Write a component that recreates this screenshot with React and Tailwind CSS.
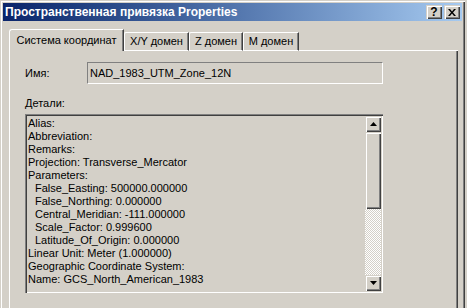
import React from 'react';

const raised =
  'shadow-[inset_1px_1px_#d4d0c8,inset_2px_2px_#fff,inset_-1px_-1px_#404040,inset_-2px_-2px_#808080]';

const details = [
  ['Alias:', false],
  ['Abbreviation:', false],
  ['Remarks:', false],
  ['Projection: Transverse_Mercator', false],
  ['Parameters:', false],
  ['False_Easting: 500000.000000', true],
  ['False_Northing: 0.000000', true],
  ['Central_Meridian: -111.000000', true],
  ['Scale_Factor: 0.999600', true],
  ['Latitude_Of_Origin: 0.000000', true],
  ['Linear Unit: Meter (1.000000)', false],
  ['Geographic Coordinate System:', false],
  ['Name: GCS_North_American_1983', false],
];

const Arrow = ({ down }) => (
  <svg width="7" height="4" viewBox="0 0 7 4">
    {down ? <path d="M0 0h7L3.5 4z" fill="#000" /> : <path d="M3.5 0L7 4H0z" fill="#000" />}
  </svg>
);

const Tab = ({ label, width, active }) => (
  <div
    className={
      active
        ? 'h-[22px] flex items-center justify-center border-l border-t border-white rounded-tl-[3px] border-r border-r-[#404040] shadow-[inset_-1px_0_#808080]'
        : 'h-[19px] flex items-center justify-center border-l border-t border-b border-white border-r border-r-[#404040] rounded-tl-[2px] shadow-[inset_-1px_0_#808080]'
    }
    style={{ width }}
  >
    {label}
  </div>
);

export default function App() {
  return (
    <div className="w-[467px] h-[308px] overflow-hidden bg-[#d4d0c8] font-['Liberation_Sans',sans-serif] text-[11px] text-black leading-[13px]">
      <div className="w-[465px] h-[330px] p-[3px] shadow-[inset_1px_1px_#d4d0c8,inset_2px_2px_#fff,inset_-1px_-1px_#404040,inset_-2px_-2px_#808080]">
        {/* title bar */}
        <div className="h-[18px] flex items-center pl-[2px] pr-[2px] gap-[2px] bg-gradient-to-r from-[#0a246a] to-[#a6caf0]">
          <span className="flex-1 font-bold text-white text-[12px]">Пространственная привязка Properties</span>
          <div className={`w-[16px] h-[14px] bg-[#d4d0c8] flex items-center justify-center font-bold text-[12px] ${raised}`}>?</div>
          <div className={`w-[16px] h-[14px] bg-[#d4d0c8] flex items-center justify-center ${raised}`}>
            <svg width="8" height="7" viewBox="0 0 8 7">
              <path d="M0 0h2l2 2.5L6 0h2L5 3.5 8 7H6L4 4.5 2 7H0l3-3.5z" fill="#000" />
            </svg>
          </div>
        </div>

        <div className="ml-[6px] mt-[8px] w-[449px]">
          {/* tabs */}
          <div className="flex items-end">
            <Tab label="Система координат" width={115} active />
            <Tab label="X/Y домен" width={65} />
            <Tab label="Z домен" width={54} />
            <Tab label="M домен" width={56} />
            <div className="flex-1 border-b border-white" />
          </div>

          {/* panel */}
          <div className="h-[260px] border-l border-white border-r border-r-[#404040] shadow-[inset_-1px_0_#808080] pl-[15px] pt-[11px]">
            <div className="flex items-center">
              <span className="w-[62px]">Имя:</span>
              <div className="w-[296px] h-[22px] flex items-center pl-[2px] border border-t-[#808080] border-l-[#808080] border-b-white border-r-white">
                NAD_1983_UTM_Zone_12N
              </div>
            </div>

            <div className="mt-[13px]">Детали:</div>

            <div className="mt-[4px] w-[358px] h-[179px] flex p-[2px] shadow-[inset_1px_1px_#808080,inset_2px_2px_#404040,inset_-1px_-1px_#fff,inset_-2px_-2px_#d4d0c8]">
              <div className="flex-1 pl-[1px] pt-[1px] overflow-hidden whitespace-pre">
                {details.map(([t, indent]) => (
                  <div key={t} className={indent ? 'pl-[7px]' : ''}>
                    {t}
                  </div>
                ))}
              </div>
              <div className="w-[16px] flex flex-col">
                <div className={`h-[16px] flex items-center justify-center ${raised}`}>
                  <Arrow />
                </div>
                <div className={`h-[77px] ${raised}`} />
                <div className="h-[66px] bg-[repeating-conic-gradient(#fff_0_25%,#d4d0c8_0_50%)] bg-[length:2px_2px]" />
                <div className={`h-[16px] flex items-center justify-center ${raised}`}>
                  <Arrow down />
                </div>
              </div>
            </div>
          </div>
        </div>
      </div>
    </div>
  );
}
